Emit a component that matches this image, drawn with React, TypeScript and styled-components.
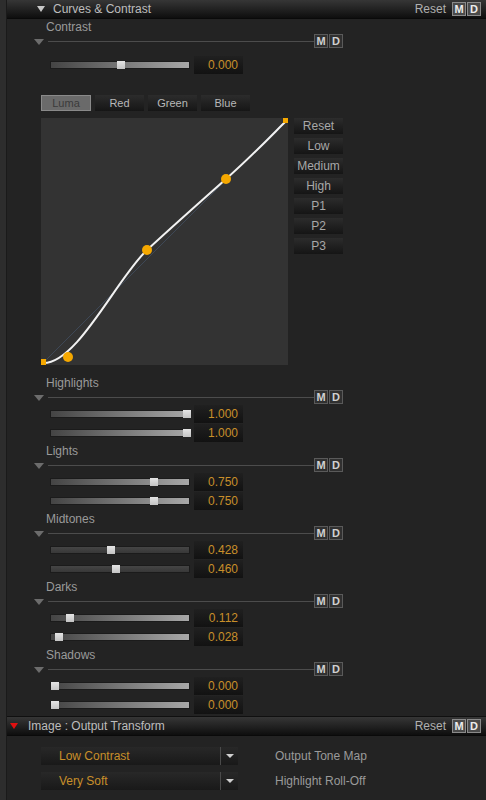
import React from 'react';
import styled, { createGlobalStyle } from 'styled-components';

const GlobalStyle = createGlobalStyle`
  html, body {
    margin: 0;
    padding: 0;
    background: #222222;
  }
  body {
    font-family: "Liberation Sans", Arial, sans-serif;
    font-size: 12px;
  }
`;

type SliderData = { value: string; pos: number; flat?: boolean };
type Group = { label: string; sliders: SliderData[] };

const groups: Group[] = [
  {
    label: 'Highlights',
    sliders: [
      { value: '1.000', pos: 1 },
      { value: '1.000', pos: 1 },
    ],
  },
  {
    label: 'Lights',
    sliders: [
      { value: '0.750', pos: 0.75 },
      { value: '0.750', pos: 0.75 },
    ],
  },
  {
    label: 'Midtones',
    sliders: [
      { value: '0.428', pos: 0.428, flat: true },
      { value: '0.460', pos: 0.46, flat: true },
    ],
  },
  {
    label: 'Darks',
    sliders: [
      { value: '0.112', pos: 0.112 },
      { value: '0.028', pos: 0.028 },
    ],
  },
  {
    label: 'Shadows',
    sliders: [
      { value: '0.000', pos: 0 },
      { value: '0.000', pos: 0 },
    ],
  },
];

const presets = ['Reset', 'Low', 'Medium', 'High', 'P1', 'P2', 'P3'];
const channels = ['Luma', 'Red', 'Green', 'Blue'];

function MD({ bright }: { bright?: boolean }) {
  return (
    <MDWrap>
      <MDBox $bright={bright}>M</MDBox>
      <MDBox $bright={bright}>D</MDBox>
    </MDWrap>
  );
}

function Slider({ value, pos, flat }: SliderData) {
  return (
    <SliderRow>
      <Track $flat={flat}>
        <Thumb style={{ left: `${pos * 132}px` }} />
      </Track>
      <ValueBox>{value}</ValueBox>
    </SliderRow>
  );
}

function Divider() {
  return (
    <DividerRow>
      <GroupArrow />
      <Line />
      <MD />
    </DividerRow>
  );
}

function Curve() {
  return (
    <CurveBox>
      <svg width="247" height="247" viewBox="0 0 247 247">
        <line x1="2" y1="245" x2="245" y2="2" stroke="#3e4856" strokeWidth="1" />
        <path
          d="M2,245 C36,246 76,160 106,132 C132,108 159,84 185,61 C210,39 228,20 245,3"
          fill="none"
          stroke="#f2f2f2"
          strokeWidth="2"
        />
        <rect x="0" y="241" width="5" height="6" fill="#f5a800" />
        <rect x="242" y="0" width="5" height="5" fill="#f5a800" />
        <circle cx="27" cy="239" r="5" fill="#f5a800" />
        <circle cx="106" cy="132" r="5" fill="#f5a800" />
        <circle cx="185" cy="61" r="5" fill="#f5a800" />
      </svg>
    </CurveBox>
  );
}

export default function App() {
  return (
    <>
      <GlobalStyle />
      <Page>
        <Gutter />
        <Main>
          <PanelHeader>
            <HeaderArrow />
            <HeaderTitle>Curves &amp; Contrast</HeaderTitle>
            <HeaderReset>Reset</HeaderReset>
            <MD bright />
          </PanelHeader>

          <Body>
            <GroupLabel>Contrast</GroupLabel>
            <Divider />
            <Spacer $h={8} />
            <Slider value="0.000" pos={0.5} />

            <Tabs>
              {channels.map((c, i) => (
                <Tab key={c} $active={i === 0}>
                  {c}
                </Tab>
              ))}
            </Tabs>

            <CurveRow>
              <Curve />
              <PresetColumn>
                {presets.map((p) => (
                  <PresetButton key={p}>{p}</PresetButton>
                ))}
              </PresetColumn>
            </CurveRow>

            <Spacer $h={11} />
            {groups.map((g) => (
              <GroupBlock key={g.label}>
                <GroupLabel>{g.label}</GroupLabel>
                <Divider />
                <SliderStack>
                  {g.sliders.map((s, i) => (
                    <Slider key={i} {...s} />
                  ))}
                </SliderStack>
              </GroupBlock>
            ))}
          </Body>

          <PanelHeader $second>
            <RedArrow />
            <HeaderTitle $second>Image : Output Transform</HeaderTitle>
            <HeaderReset>Reset</HeaderReset>
            <MD bright />
          </PanelHeader>

          <DropBody>
            <DropRow>
              <Dropdown>
                <DropText>Low Contrast</DropText>
                <DropArrow>
                  <SmallArrow />
                </DropArrow>
              </Dropdown>
              <DropLabel>Output Tone Map</DropLabel>
            </DropRow>
            <DropRow>
              <Dropdown>
                <DropText>Very Soft</DropText>
                <DropArrow>
                  <SmallArrow />
                </DropArrow>
              </Dropdown>
              <DropLabel>Highlight Roll-Off</DropLabel>
            </DropRow>
          </DropBody>
        </Main>
      </Page>
    </>
  );
}

const Page = styled.div`
  display: flex;
  width: 486px;
  height: 800px;
  background: #232323;
  overflow: hidden;
`;

const Gutter = styled.div`
  flex: none;
  width: 6px;
  background: #2d2d2d;
  border-right: 1px solid #1a1a1a;
`;

const Main = styled.div`
  flex: 1;
  min-width: 0;
  display: flex;
  flex-direction: column;
`;

const PanelHeader = styled.div<{ $second?: boolean }>`
  flex: none;
  height: 18px;
  display: flex;
  align-items: center;
  padding: 0 5px 0 ${(p) => (p.$second ? '3px' : '30px')};
  background: linear-gradient(#363636, #0e0e0e);
  border-top: ${(p) => (p.$second ? '1px solid #101010' : 'none')};
  border-bottom: 1px solid #0a0a0a;
`;

const HeaderArrow = styled.div`
  width: 0;
  height: 0;
  border-left: 4px solid transparent;
  border-right: 4px solid transparent;
  border-top: 6px solid #c8c8c8;
`;

const RedArrow = styled.div`
  width: 0;
  height: 0;
  border-left: 4.5px solid transparent;
  border-right: 4.5px solid transparent;
  border-top: 6px solid #e01010;
`;

const HeaderTitle = styled.span<{ $second?: boolean }>`
  margin-left: ${(p) => (p.$second ? '10px' : '8px')};
  color: #bdbdbd;
  font-size: 12px;
`;

const HeaderReset = styled.span`
  margin-left: auto;
  margin-right: 6px;
  color: #b0b0b0;
  font-size: 12px;
`;

const MDWrap = styled.div`
  display: flex;
  gap: 1px;
`;

const MDBox = styled.div<{ $bright?: boolean }>`
  width: 12px;
  height: 12px;
  border: 1px solid ${(p) => (p.$bright ? '#8a8a8a' : '#5a5a5a')};
  background: ${(p) => (p.$bright ? '#4a4a4a' : '#303030')};
  color: ${(p) => (p.$bright ? '#ececec' : '#d0d0d0')};
  font-size: 11px;
  font-weight: bold;
  line-height: 12px;
  text-align: center;
`;

const Body = styled.div`
  flex: 1;
  display: flex;
  flex-direction: column;
  padding-top: 1px;
`;

const Spacer = styled.div<{ $h: number }>`
  flex: none;
  height: ${(p) => p.$h}px;
`;

const GroupBlock = styled.div`
  display: flex;
  flex-direction: column;
  padding-bottom: 2px;
`;

const GroupLabel = styled.div`
  height: 14px;
  line-height: 14px;
  padding-left: 39px;
  color: #9a9a9a;
  font-size: 12px;
`;

const DividerRow = styled.div`
  height: 14px;
  width: 309px;
  margin-left: 27px;
  display: flex;
  align-items: center;
`;

const GroupArrow = styled.div`
  flex: none;
  width: 0;
  height: 0;
  margin-top: 2px;
  border-left: 5px solid transparent;
  border-right: 5px solid transparent;
  border-top: 6px solid #6c6c6c;
`;

const Line = styled.div`
  flex: 1;
  height: 1px;
  margin-left: 4px;
  background: #4c4c4c;
`;

const SliderStack = styled.div`
  display: flex;
  flex-direction: column;
  gap: 1px;
  padding-top: 1px;
`;

const SliderRow = styled.div`
  height: 18px;
  margin-left: 43px;
  display: flex;
  align-items: center;
  gap: 4px;
`;

const Track = styled.div<{ $flat?: boolean }>`
  position: relative;
  width: 140px;
  height: 8px;
  box-sizing: border-box;
  border: 1px solid #1b1b1b;
  background: ${(p) =>
    p.$flat
      ? 'linear-gradient(#454545, #383838)'
      : 'linear-gradient(to right, #444444, #a8a8a8)'};
`;

const Thumb = styled.div`
  position: absolute;
  top: -1px;
  width: 8px;
  height: 8px;
  background: linear-gradient(#e4e4e4, #c4c4c4);
`;

const ValueBox = styled.div`
  width: 49px;
  height: 18px;
  box-sizing: border-box;
  padding-right: 5px;
  background: linear-gradient(#202020, #121212);
  color: #c88f2a;
  font-size: 12px;
  line-height: 18px;
  text-align: right;
`;

const Tabs = styled.div`
  margin: 21px 0 0 34px;
  display: flex;
  gap: 4px;
`;

const Tab = styled.div<{ $active?: boolean }>`
  width: ${(p) => (p.$active ? '48px' : '49px')};
  height: ${(p) => (p.$active ? '14px' : '16px')};
  border: ${(p) => (p.$active ? '1px solid #8a8a8a' : 'none')};
  background: ${(p) =>
    p.$active ? '#6a6a6a' : 'linear-gradient(#2c2c2c, #161616)'};
  color: ${(p) => (p.$active ? '#3a3a3a' : '#b8b8b8')};
  font-size: 11px;
  line-height: ${(p) => (p.$active ? '14px' : '16px')};
  text-align: center;
`;

const CurveRow = styled.div`
  margin: 7px 0 0 34px;
  display: flex;
  gap: 6px;
`;

const CurveBox = styled.div`
  width: 247px;
  height: 247px;
  background: #333333;
  svg {
    display: block;
  }
`;

const PresetColumn = styled.div`
  display: flex;
  flex-direction: column;
  gap: 4px;
`;

const PresetButton = styled.div`
  width: 49px;
  height: 16px;
  background: linear-gradient(#2c2c2c, #151515);
  color: #a8a8a8;
  font-size: 12px;
  line-height: 16px;
  text-align: center;
`;

const DropBody = styled.div`
  flex: none;
  height: 66px;
  display: flex;
  flex-direction: column;
  gap: 7px;
  padding-top: 11px;
  box-sizing: border-box;
`;

const DropRow = styled.div`
  margin-left: 34px;
  display: flex;
  align-items: center;
`;

const Dropdown = styled.div`
  width: 197px;
  height: 18px;
  display: flex;
  background: linear-gradient(#282828, #191919);
`;

const DropText = styled.div`
  flex: 1;
  padding-left: 18px;
  color: #c88f2a;
  font-size: 12px;
  line-height: 18px;
`;

const DropArrow = styled.div`
  width: 17px;
  display: flex;
  align-items: center;
  justify-content: center;
  border-left: 1px solid #4a4a4a;
`;

const SmallArrow = styled.div`
  width: 0;
  height: 0;
  border-left: 4px solid transparent;
  border-right: 4px solid transparent;
  border-top: 4px solid #d0d0d0;
`;

const DropLabel = styled.div`
  margin-left: 37px;
  color: #9a9a9a;
  font-size: 12px;
`;
